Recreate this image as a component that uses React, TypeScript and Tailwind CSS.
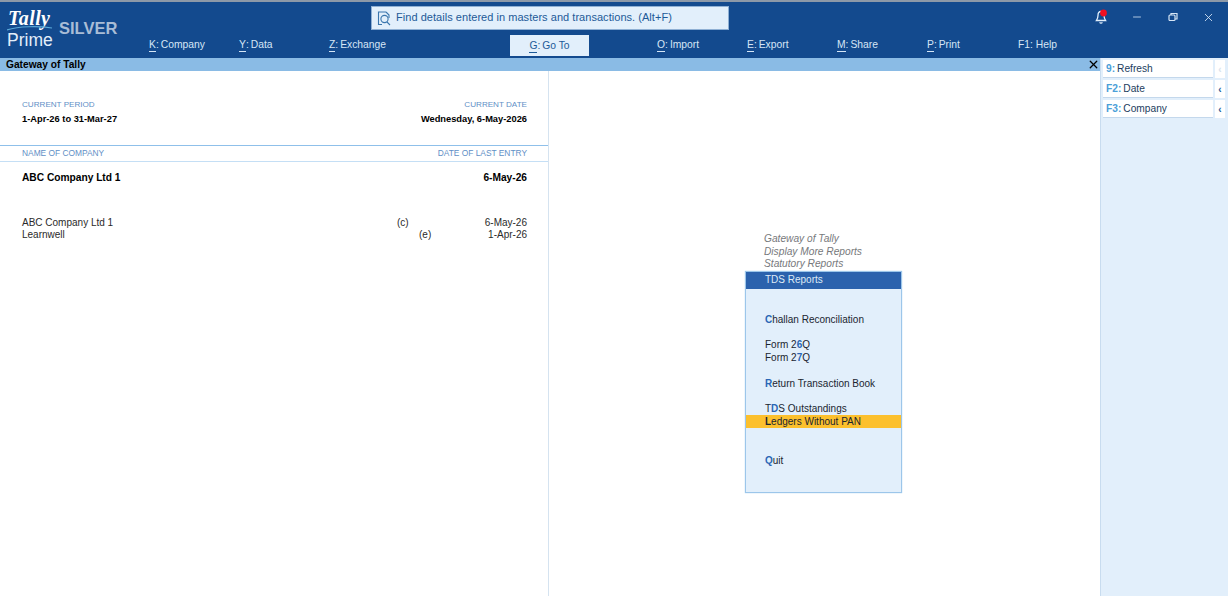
import { Minus, X } from "lucide-react";

const sans = "font-['Liberation_Sans',Arial,sans-serif]";

const navLeft = [
  { k: "K", label: "Company", w: "w-[90px]" },
  { k: "Y", label: "Data", w: "w-[90px]" },
  { k: "Z", label: "Exchange", w: "w-[181px]" },
];

const navRight = [
  { k: "O", label: "Import" },
  { k: "E", label: "Export" },
  { k: "M", label: "Share" },
  { k: "P", label: "Print" },
];

function NavItem({ k, label, className }: { k: string; label: string; className: string }) {
  return (
    <div className={`flex items-baseline text-[10.3px] ${className}`}>
      <span className="border-b border-current leading-[13px]">{k}</span>
      <span className="mr-[2px]">:</span>
      <span>{label}</span>
    </div>
  );
}

function Logo() {
  return (
    <div className="flex w-[149px] shrink-0 items-start pl-[7px]">
      <div className="flex flex-col">
        <span className="ml-[1px] h-[18px] font-['Liberation_Serif',serif] text-[20px] leading-[20px] font-bold tracking-[0.4px] text-white italic">
          Tally
        </span>
        <svg width="46" height="5" viewBox="0 0 46 5" className="block">
          <path d="M0 4 C 12 0, 32 0, 45 2" stroke="#5aa9d8" strokeWidth="1.2" fill="none" />
        </svg>
        <span className="h-[20px] text-[17.5px] leading-[19px] text-[#e3eefa]">Prime</span>
      </div>
      <span className="mt-[12px] ml-[6px] text-[16.5px] leading-[17px] font-bold text-[#a9bdd6]">
        SILVER
      </span>
    </div>
  );
}

function Header() {
  return (
    <header className="h-[58px] border-t-2 border-[#8d99a8] bg-[#134a8e]">
      <div className="flex h-[28px] items-start">
        <div className="w-[371px] shrink-0" />
        <div className="mt-[4px] flex h-[24px] w-[358px] items-center border border-[#8fb0d4] bg-[#e2effb] pl-[5px]">
          <svg width="14" height="15" viewBox="0 0 14 15" fill="none" stroke="#3a76ad" strokeWidth="1.1">
            <path d="M9 1H1.5v12.5H5" />
            <path d="M9 1l3 3v3" />
            <circle cx="7.5" cy="8" r="3.6" />
            <path d="M10 11l3 3" />
          </svg>
          <span className="ml-[5px] pb-[1px] text-[11px] tracking-[0.04px] text-[#1d5a98]">
            Find details entered in masters and transactions. (Alt+F)
          </span>
        </div>
        <div className="ml-auto flex items-center pt-[7px]">
          <svg width="13" height="16" viewBox="0 0 13 16" className="mr-[23px]" fill="none">
            <path d="M6 2.5C3.6 2.5 3 4.5 3 6.5c0 2-.6 3.5-1.6 5h9.2C9.6 10 9 8.5 9 6.5" stroke="#e2effb" strokeWidth="1.3" />
            <path d="M4.7 13.2a1.4 1.4 0 0 0 2.6 0" stroke="#e2effb" strokeWidth="1.2" />
            <circle cx="8.5" cy="4" r="3.4" fill="#f01020" />
          </svg>
          <Minus size={12} className="mr-[25px] text-[#d6e6f6]" strokeWidth={1.6} />
          <svg width="10" height="10" viewBox="0 0 10 10" fill="none" stroke="#d6e6f6" strokeWidth="1.2" className="mr-[24px]">
            <rect x="1" y="3" width="6" height="5.5" rx="1" />
            <path d="M3 3V1.5h6V7H7" />
          </svg>
          <X size={13} className="mr-[13px] text-[#d6e6f6]" strokeWidth={1.6} />
        </div>
      </div>
      <div className="flex h-[28px]">
        <div className="-mt-[22px] h-[50px]">
          <Logo />
        </div>
        <div className="flex items-center pt-[2px]">
          {navLeft.map((n) => (
            <NavItem key={n.k} k={n.k} label={n.label} className={`text-[#d6e6f6] ${n.w}`} />
          ))}
        </div>
        <div className="mt-[5px] flex h-[21px] w-[79px] shrink-0 items-center justify-center bg-[#e2effb]">
          <NavItem k="G" label="Go To" className="text-[#1d5a98]" />
        </div>
        <div className="ml-[68px] flex items-center pt-[2px]">
          {navRight.map((n) => (
            <NavItem key={n.k} k={n.k} label={n.label} className="w-[90px] text-[#d6e6f6]" />
          ))}
          <div className="ml-[1px] text-[10.3px] text-[#d6e6f6]">F1: Help</div>
        </div>
      </div>
    </header>
  );
}

function SideButton({ k, label, muted }: { k: string; label: string; muted?: boolean }) {
  return (
    <div className="flex h-[18px] text-[10.2px] leading-[16px] text-[#1c3d5e]">
      <div className="flex w-[110px] items-center border-b border-[#c4d8ec] bg-white pt-[1px] pl-[3px]">
        <span className="font-bold text-[#4ba0d8]">{k}:</span>
        <span className="ml-[2px]">{label}</span>
      </div>
      <div className={`ml-[2px] flex w-[10px] items-center justify-center bg-white pt-[1px] text-[10px] font-bold ${muted ? "text-[#d7e2ec]" : "text-[#1d5a98]"}`}>
        ‹
      </div>
    </div>
  );
}

function Hot({ children }: { children: string }) {
  return <span className="font-bold text-[#2a66b5]">{children}</span>;
}

function Row({ children, className }: { children: React.ReactNode; className?: string }) {
  return <div className={`h-[13px] pl-[19px] text-[10px] leading-[13px] text-[#1a2530] ${className ?? ""}`}>{children}</div>;
}

function Menu() {
  return (
    <div className="w-[157px]">
      <div className="pl-[19px] text-[10.2px] leading-[12.6px] text-[#77797c] italic">
        <div>Gateway of Tally</div>
        <div>Display More Reports</div>
        <div>Statutory Reports</div>
      </div>
      <div className="h-[222px] border border-[#9cc6ea] bg-[#e2effb] shadow-[0_0_1px_#9cc6ea]">
        <div className="h-[17px] bg-[#2b62ad] pl-[19px] text-[10px] leading-[16px] text-[#dfeaf6]">TDS Reports</div>
        <div className="h-[24px]" />
        <Row><Hot>C</Hot>hallan Reconciliation</Row>
        <div className="h-[12px]" />
        <Row>Form 2<Hot>6</Hot>Q</Row>
        <Row>Form 2<Hot>7</Hot>Q</Row>
        <div className="h-[13px]" />
        <Row><Hot>R</Hot>eturn Transaction Book</Row>
        <div className="h-[12px]" />
        <Row>T<Hot>D</Hot>S Outstandings</Row>
        <Row className="bg-[#fcc02d]"><span className="font-bold">L</span>edgers Without PAN</Row>
        <div className="h-[26px]" />
        <Row><Hot>Q</Hot>uit</Row>
      </div>
    </div>
  );
}

function CompanyPane() {
  return (
    <div className="w-[549px] shrink-0 border-r border-[#d5e3f0]">
      <div className="flex justify-between pt-[28px] pr-[21px] pl-[22px]">
        <div>
          <div className="text-[8.1px] leading-[12px] text-[#5f8fc6]">CURRENT PERIOD</div>
          <div className="mt-[2px] text-[9.3px] leading-[13px] font-bold text-black">1-Apr-26 to 31-Mar-27</div>
        </div>
        <div className="text-right">
          <div className="text-[8.1px] leading-[12px] text-[#5f8fc6]">CURRENT DATE</div>
          <div className="mt-[2px] text-[9.3px] leading-[13px] font-bold text-black">Wednesday, 6-May-2026</div>
        </div>
      </div>
      <div className="mt-[19px] h-px bg-[#8fc0ea]" />
      <div className="flex h-[15px] items-center justify-between pr-[21px] pl-[22px] text-[8.4px] text-[#5f8fc6]">
        <span>NAME OF COMPANY</span>
        <span>DATE OF LAST ENTRY</span>
      </div>
      <div className="h-px bg-[#c5dff5]" />
      <div className="mt-[9px] flex justify-between pr-[21px] pl-[22px] text-[10.2px] leading-[13px] font-bold text-black">
        <span>ABC Company Ltd 1</span>
        <span>6-May-26</span>
      </div>
      <div className="mt-[33px] pr-[21px] pl-[22px] text-[10px] leading-[12px] text-[#2a2a2a]">
        <div className="flex">
          <span className="w-[375px]">ABC Company Ltd 1</span>
          <span>(c)</span>
          <span className="ml-auto">6-May-26</span>
        </div>
        <div className="flex">
          <span className="w-[397px]">Learnwell</span>
          <span>(e)</span>
          <span className="ml-auto">1-Apr-26</span>
        </div>
      </div>
    </div>
  );
}

export default function App() {
  return (
    <div className={`flex h-[596px] w-[1228px] flex-col overflow-hidden bg-white ${sans}`}>
      <Header />
      <div className="flex min-h-0 flex-1">
        <div className="flex w-[1100px] shrink-0 flex-col">
          <div className="flex h-[13px] items-center justify-between bg-[#8abbe5] pl-[6px] text-[10.2px] font-bold text-black">
            <span>Gateway of Tally</span>
            <X size={13} strokeWidth={2.4} />
          </div>
          <div className="flex min-h-0 flex-1">
            <CompanyPane />
            <div className="flex flex-1 justify-center pt-[162px] pr-[2px]">
              <Menu />
            </div>
          </div>
        </div>
        <aside className="flex-1 border-l border-[#c8dcef] bg-[#e2effb] pt-[2px] pl-[2px]">
          <div className="flex flex-col gap-[2px]">
            <SideButton k="9" label="Refresh" muted />
            <SideButton k="F2" label="Date" />
            <SideButton k="F3" label="Company" />
          </div>
        </aside>
      </div>
    </div>
  );
}
